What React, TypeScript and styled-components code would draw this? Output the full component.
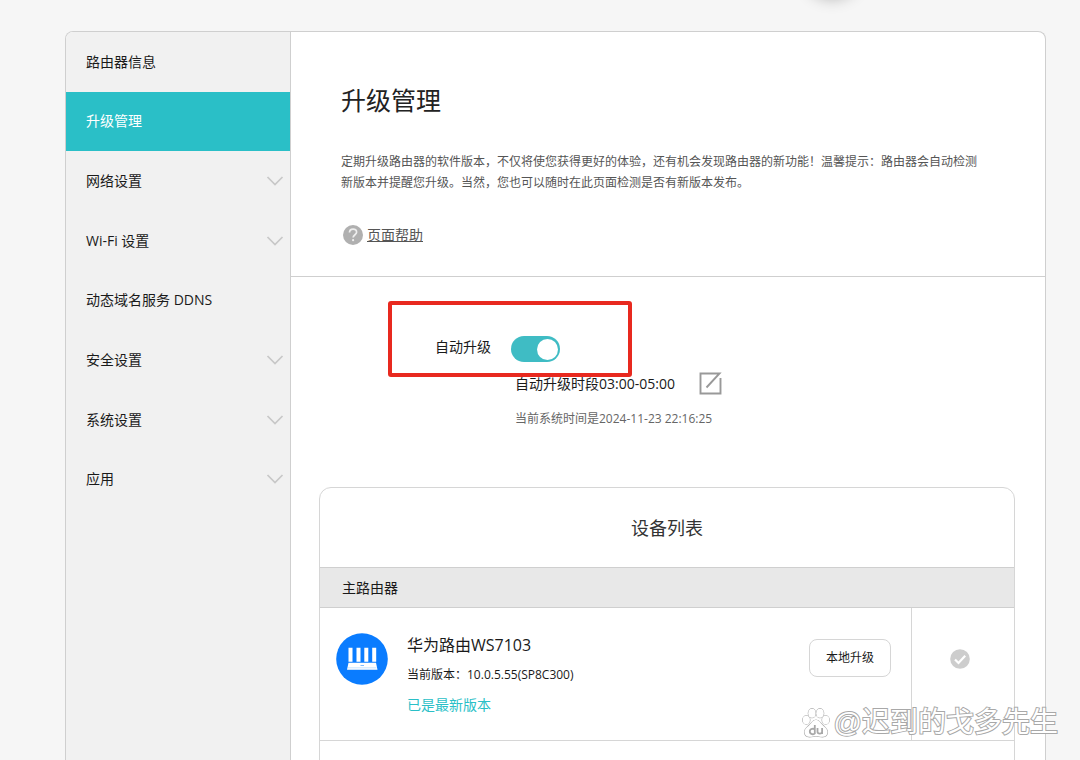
import React from "react";
import styled, { createGlobalStyle } from "styled-components";

const teal = "#2abfc7";
const line = "#cfcfcf";

const GlobalStyle = createGlobalStyle`
  *, *::before, *::after { box-sizing: border-box; }
  body {
    margin: 0;
    background: #f6f6f6;
    color: #1a1a1a;
    font-family: "Open Sans", "Noto Sans CJK SC", sans-serif;
    font-size: 14px;
    line-height: 20px;
  }
  h1, h2, p { margin: 0; font-weight: 400; }
  button { font: inherit; color: inherit; cursor: pointer; }
`;

const Page = styled.div`
  position: relative;
  display: flex;
  height: 100vh;
  padding: 31px 34px 0 65px;
  overflow: hidden;
`;

const FloatingShadow = styled.div`
  position: absolute;
  top: -58px;
  left: calc(77% - 28px);
  width: 56px;
  height: 56px;
  border-radius: 50%;
  box-shadow: 0 0 16px rgba(0, 0, 0, 0.3);
`;

const Card = styled.div`
  flex: 1;
  display: flex;
  border: 1px solid ${line};
  border-bottom: 0;
  border-radius: 8px 8px 0 0;
  background: #fff;
  overflow: hidden;
`;

const Sidebar = styled.nav`
  flex: none;
  width: 225px;
  border-right: 1px solid ${line};
  background: #f1f1f1;
`;

const NavList = styled.ul`
  display: grid;
  grid-auto-rows: 1fr;
  height: 477px;
  margin: 0;
  padding: 0;
  list-style: none;
`;

const NavLink = styled.a<{ $active?: boolean }>`
  display: flex;
  align-items: center;
  justify-content: space-between;
  height: 100%;
  padding: 0 6px 0 20px;
  background: ${(p) => (p.$active ? teal : "transparent")};
  color: ${(p) => (p.$active ? "#fff" : "#1a1a1a")};
  text-decoration: none;
`;

const Content = styled.main`
  flex: 1;
  min-width: 0;
`;

const Intro = styled.header`
  padding: 50px 60px 26px 50px;
  border-bottom: 1px solid ${line};
`;

const Title = styled.h1`
  font-size: 25px;
  line-height: 36px;
  color: #222;
`;

const Description = styled.p`
  margin-top: 33px;
  font-size: 12px;
  line-height: 21px;
  color: #555;
`;

const HelpLink = styled.a`
  display: inline-flex;
  align-items: center;
  gap: 4px;
  margin-top: 32px;
  padding: 0 0 1px 2px;
  color: #555;
`;

const Settings = styled.section`
  padding: 59px 0 0 144px;
`;

const SwitchRow = styled.div`
  position: relative;
  display: flex;
  align-items: center;
  gap: 20px;
  height: 26px;
`;

const SwitchLabel = styled.label`
  padding-bottom: 4px;
`;

const Highlight = styled.div`
  position: absolute;
  top: -35px;
  left: -47px;
  width: 244px;
  height: 76px;
  border: 4px solid #e8291f;
  border-radius: 3px;
  pointer-events: none;
`;

const Switch = styled.input`
  appearance: none;
  display: flex;
  align-items: center;
  justify-content: flex-end;
  width: 49px;
  height: 26px;
  margin: 0;
  padding: 2px;
  border-radius: 13px;
  background: #3fbcc4;
  cursor: pointer;

  &::before {
    content: "";
    width: 21px;
    height: 21px;
    border-radius: 50%;
    background: #fff;
  }
  &:not(:checked) {
    justify-content: flex-start;
    background: #bbb;
  }
`;

const Schedule = styled.div`
  display: flex;
  flex-direction: column;
  gap: 14px;
  margin-top: 10px;
  padding-left: 80px;
`;

const Period = styled.div`
  display: flex;
  align-items: center;
  gap: 24px;
`;

const Clock = styled.p`
  font-size: 12px;
  color: #666;
`;

const IconButton = styled.button`
  display: flex;
  padding: 0;
  border: 0;
  background: none;
`;

const Devices = styled.section`
  margin: 58px 30px 0 28px;
  border: 1px solid #d6d6d6;
  border-radius: 12px 12px 0 0;
`;

const DevicesTitle = styled.h2`
  padding: 28px 0 27px;
  font-size: 18px;
  line-height: 24px;
  color: #333;
  text-align: center;
`;

const GroupName = styled.div`
  padding: 10px 22px 9px;
  border: 1px solid ${line};
  border-width: 1px 0;
  background: #e8e8e8;
`;

const DeviceRow = styled.div`
  display: flex;
  min-height: 133px;
  border-bottom: 1px solid #d6d6d6;
`;

const DeviceMain = styled.div`
  flex: 1;
  display: flex;
  align-items: flex-start;
  padding: 25px 20px 0 16px;
`;

const DeviceInfo = styled.div`
  flex: 1;
  display: flex;
  flex-direction: column;
  gap: 10px;
  padding: 2px 0 0 19px;
`;

const DeviceName = styled.p`
  font-size: 16px;
`;

const Version = styled.p`
  font-size: 12px;
`;

const Latest = styled.p`
  color: ${teal};
`;

const UpgradeButton = styled.button`
  margin-top: 6px;
  padding: 8px 16px;
  border: 1px solid #d6d6d6;
  border-radius: 8px;
  background: #fff;
  font-size: 12px;
`;

const DeviceStatus = styled.div`
  display: flex;
  justify-content: center;
  width: 103px;
  padding-top: 41px;
  padding-right: 6px;
  border-left: 1px solid #d6d6d6;
`;

const Watermark = styled.div`
  position: absolute;
  right: 22px;
  bottom: 19px;
  display: flex;
  align-items: center;
  gap: 4px;
  font-family: "Liberation Sans", "Noto Sans CJK SC", sans-serif;
  font-size: 28px;
  line-height: 36px;
  color: #fff;
  -webkit-text-stroke: 2px #a8a8a8;
  paint-order: stroke fill;
`;

const Chevron = () => (
  <svg width="18" height="10" viewBox="0 0 18 10" fill="none" stroke="#c8c8c8" strokeWidth="1.7" aria-hidden="true">
    <path d="M1.500 1 9 8.500 16.500 1" />
  </svg>
);

const HelpIcon = () => (
  <svg width="20" height="20" viewBox="0 0 20 20" fill="none" aria-hidden="true">
    <circle cx="10" cy="10" r="10" fill="#b0b0b0" />
    <path d="M6.500 7.600C6.500 5.500 8.100 4.200 10.100 4.200S13.600 5.500 13.600 7.300C13.600 9.700 10.100 9.800 10.100 12.600" stroke="#eee" strokeWidth="1.700" />
    <circle cx="10.100" cy="15.200" r="1.100" fill="#eee" />
  </svg>
);

const EditIcon = () => (
  <svg width="23" height="23" viewBox="0 0 23 23" fill="none" stroke="#999" strokeWidth="1.900" aria-hidden="true">
    <path d="M21.500 6V21.500H1.500V1.500H20.500L7.500 15.500" />
  </svg>
);

const RouterIcon = () => (
  <svg width="52" height="52" viewBox="0 0 52 52" aria-hidden="true">
    <circle cx="26" cy="26" r="25.800" fill="#0a7cff" />
    <path fill="#fff" d="M12.500 14.800h4v14h-4zM20.500 14.800h4v14h-4zM28.300 14.800h4v14h-4zM36.200 14.800h4v14h-4zM12.500 29.800h27.500l1.500 7h-30.500z" />
    <path d="M12 34.800h28.500" stroke="#b9dcff" strokeWidth="0.800" />
    <path d="M24.500 32.500h3.500" stroke="#7fbcff" strokeWidth="1" />
  </svg>
);

const CheckIcon = () => (
  <svg width="20" height="20" viewBox="0 0 20 20" fill="none" aria-hidden="true">
    <circle cx="10" cy="10" r="9.800" fill="#cdcdcd" />
    <path d="M5 10.500 8.500 14 15.200 6.800" stroke="#fff" strokeWidth="2.200" />
  </svg>
);

const PawIcon = () => (
  <svg width="28" height="30" viewBox="0 0 28 30" fill="#fff" stroke="#a8a8a8" strokeWidth="1.200" aria-hidden="true">
    <ellipse cx="4.300" cy="12" rx="3.600" ry="4.200" />
    <ellipse cx="10" cy="5.200" rx="3.700" ry="4.500" />
    <ellipse cx="18" cy="5.200" rx="3.700" ry="4.500" />
    <ellipse cx="23.700" cy="12" rx="3.600" ry="4.200" />
    <path d="M14 12c-3 0-4 2.500-6.500 5S2.500 21 2.500 24s2 4.800 5 4.800 4-.6 6.500-.6 3.500.6 6.500.6 5-1.800 5-4.800-2.500-4.500-5-7S17 12 14 12z" />
    <path fill="none" strokeWidth="1.800" d="M12.800 17v9M12.800 21.500c-1-1.200-5-1-5 2s4 3.200 5 2M15.500 20v3.800c0 2.400 4.600 2.400 4.600 0v-3.800 6" />
  </svg>
);

const navItems = [
  { label: "路由器信息" },
  { label: "升级管理", active: true },
  { label: "网络设置", expandable: true },
  { label: "Wi-Fi 设置", expandable: true },
  { label: "动态域名服务 DDNS" },
  { label: "安全设置", expandable: true },
  { label: "系统设置", expandable: true },
  { label: "应用", expandable: true },
];

export default function App() {
  return (
    <Page>
      <GlobalStyle />
      <FloatingShadow />
      <Card>
        <Sidebar>
          <NavList>
            {navItems.map((item) => (
              <li key={item.label}>
                <NavLink href="#" $active={item.active} aria-current={item.active ? "page" : undefined}>
                  {item.label}
                  {item.expandable && <Chevron />}
                </NavLink>
              </li>
            ))}
          </NavList>
        </Sidebar>
        <Content>
          <Intro>
            <Title>升级管理</Title>
            <Description>
              定期升级路由器的软件版本，不仅将使您获得更好的体验，还有机会发现路由器的新功能！温馨提示：路由器会自动检测新版本并提醒您升级。当然，您也可以随时在此页面检测是否有新版本发布。
            </Description>
            <HelpLink href="#">
              <HelpIcon />
              页面帮助
            </HelpLink>
          </Intro>
          <Settings>
            <SwitchRow>
              <SwitchLabel htmlFor="auto-upgrade">自动升级</SwitchLabel>
              <Switch id="auto-upgrade" type="checkbox" role="switch" defaultChecked />
              <Highlight />
            </SwitchRow>
            <Schedule>
              <Period>
                自动升级时段03:00-05:00
                <IconButton type="button" aria-label="编辑">
                  <EditIcon />
                </IconButton>
              </Period>
              <Clock>当前系统时间是2024-11-23 22:16:25</Clock>
            </Schedule>
          </Settings>
          <Devices>
            <DevicesTitle>设备列表</DevicesTitle>
            <GroupName>主路由器</GroupName>
            <DeviceRow>
              <DeviceMain>
                <RouterIcon />
                <DeviceInfo>
                  <DeviceName>华为路由WS7103</DeviceName>
                  <Version>当前版本：10.0.5.55(SP8C300)</Version>
                  <Latest>已是最新版本</Latest>
                </DeviceInfo>
                <UpgradeButton type="button">本地升级</UpgradeButton>
              </DeviceMain>
              <DeviceStatus>
                <CheckIcon />
              </DeviceStatus>
            </DeviceRow>
            <DeviceRow />
          </Devices>
        </Content>
      </Card>
      <Watermark>
        <PawIcon />
        <span>@迟到的戈多先生</span>
      </Watermark>
    </Page>
  );
}
